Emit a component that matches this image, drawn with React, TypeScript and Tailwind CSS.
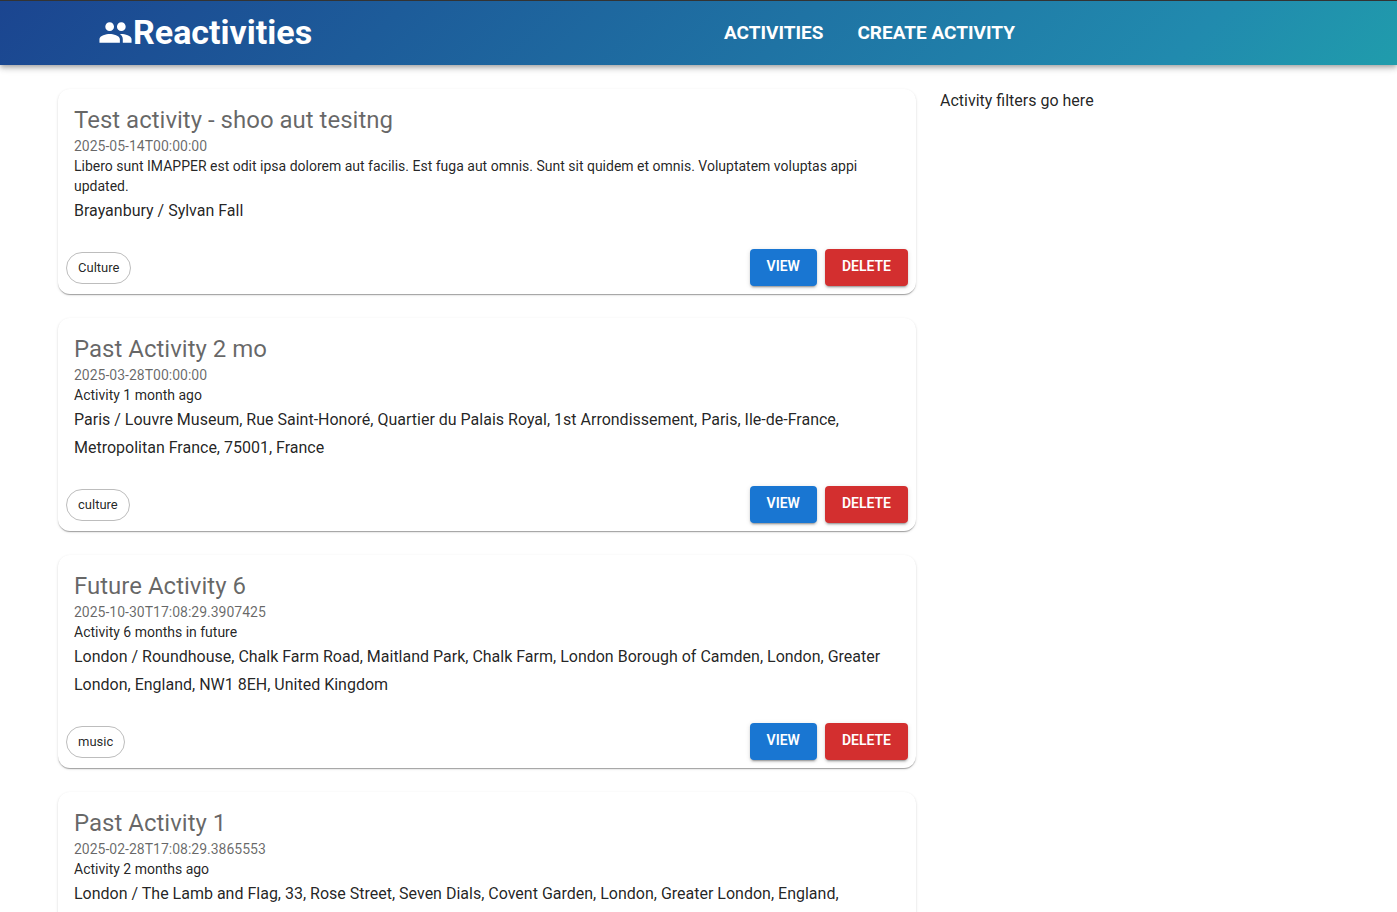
import { MdGroup } from "react-icons/md";

type Activity = {
  id: number;
  title: string;
  date: string;
  description: string;
  place: string;
  category: string;
};

const activities: Activity[] = [
  {
    id: 1,
    title: "Test activity - shoo aut tesitng",
    date: "2025-05-14T00:00:00",
    description:
      "Libero sunt IMAPPER est odit ipsa dolorem aut facilis. Est fuga aut omnis. Sunt sit quidem et omnis. Voluptatem voluptas appi updated.",
    place: "Brayanbury / Sylvan Fall",
    category: "Culture",
  },
  {
    id: 2,
    title: "Past Activity 2 mo",
    date: "2025-03-28T00:00:00",
    description: "Activity 1 month ago",
    place:
      "Paris / Louvre Museum, Rue Saint-Honoré, Quartier du Palais Royal, 1st Arrondissement, Paris, Ile-de-France, Metropolitan France, 75001, France",
    category: "culture",
  },
  {
    id: 3,
    title: "Future Activity 6",
    date: "2025-10-30T17:08:29.3907425",
    description: "Activity 6 months in future",
    place:
      "London / Roundhouse, Chalk Farm Road, Maitland Park, Chalk Farm, London Borough of Camden, London, Greater London, England, NW1 8EH, United Kingdom",
    category: "music",
  },
  {
    id: 4,
    title: "Past Activity 1",
    date: "2025-02-28T17:08:29.3865553",
    description: "Activity 2 months ago",
    place:
      "London / The Lamb and Flag, 33, Rose Street, Seven Dials, Covent Garden, London, Greater London, England, WC2E\u00a09EB, United Kingdom",
    category: "drinks",
  },
];

const buttonClass =
  "h-[37px] cursor-pointer rounded px-[17px] pb-[3px] text-sm font-semibold uppercase text-white shadow-[0_3px_1px_-2px_rgba(0,0,0,0.2),0_2px_2px_0_rgba(0,0,0,0.14),0_1px_5px_0_rgba(0,0,0,0.12)]";

function NavBar() {
  return (
    <header className="relative flex h-[65px] items-center justify-between border-t border-[#333] bg-[linear-gradient(135deg,#1b4590_0%,#218aae_84%,#209cac_100%)] pr-[382px] pl-[98px] text-white shadow-[0_2px_4px_-1px_rgba(0,0,0,0.2),0_4px_5px_0_rgba(0,0,0,0.14),0_1px_10px_0_rgba(0,0,0,0.12)]">
      <a href="#" className="flex items-center pb-0.5">
        <MdGroup className="size-[35px]" aria-hidden="true" />
        <span className="text-[34px] leading-[42px] font-bold">Reactivities</span>
      </a>
      <nav className="flex gap-[34px] text-[19px] leading-7 font-bold uppercase">
        <a href="#activities">Activities</a>
        <a href="#create">Create Activity</a>
      </nav>
    </header>
  );
}

function ActivityCard({ activity }: { activity: Activity }) {
  return (
    <article className="rounded-xl bg-white shadow-[0_2px_1px_-1px_rgba(0,0,0,0.2),0_1px_1px_0_rgba(0,0,0,0.14),0_1px_3px_0_rgba(0,0,0,0.12)]">
      <div className="p-4">
        <h2 className="text-2xl leading-[31px] text-black/60">{activity.title}</h2>
        <p className="text-sm leading-5 text-black/60">{activity.date}</p>
        <p className="text-sm leading-5">{activity.description}</p>
        <p className="pt-px text-base leading-7">{activity.place}</p>
      </div>
      <div className="flex items-center justify-between p-2">
        <span className="flex h-8 items-center rounded-full border border-[#bdbdbd] px-[11px] text-[13px]">
          {activity.category}
        </span>
        <div className="flex gap-2">
          <button type="button" className={`${buttonClass} bg-[#1976d2]`}>
            View
          </button>
          <button type="button" className={`${buttonClass} bg-[#d32f2f]`}>
            Delete
          </button>
        </div>
      </div>
    </article>
  );
}

export default function App() {
  return (
    <div className="min-h-screen bg-white font-[Roboto,sans-serif] text-black/87">
      <NavBar />
      <main className="grid grid-cols-12 gap-6 pt-6 pr-10 pl-[58px]">
        <section id="activities" className="col-span-8 flex flex-col gap-6">
          {activities.map((activity) => (
            <ActivityCard key={activity.id} activity={activity} />
          ))}
        </section>
        <aside className="col-span-4 text-base leading-6">Activity filters go here</aside>
      </main>
    </div>
  );
}
